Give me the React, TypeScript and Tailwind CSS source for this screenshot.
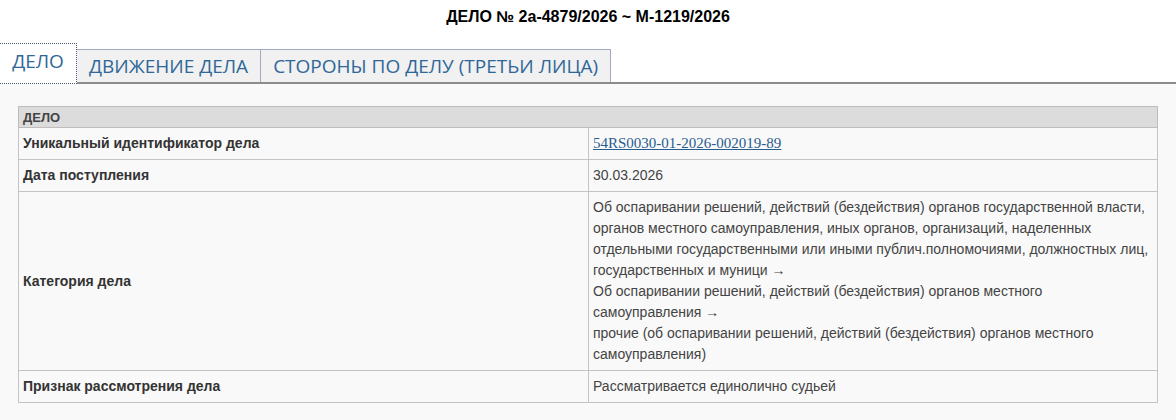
const rows = [
  {
    label: 'Уникальный идентификатор дела',
    value: (
      <a href="#" className="font-['Liberation_Serif',serif] text-[15px] text-[#2a5d8f] underline">
        54RS0030-01-2026-002019-89
      </a>
    ),
  },
  { label: 'Дата поступления', value: '30.03.2026' },
  {
    label: 'Категория дела',
    value: (
      <>
        Об оспаривании решений, действий (бездействия) органов государственной власти, органов
        местного самоуправления, иных органов, организаций, наделенных отдельными
        государственными или иными публич.полномочиями, должностных лиц, государственных и
        муници →
        <br />
        Об оспаривании решений, действий (бездействия) органов местного самоуправления →
        <br />
        прочие (об оспаривании решений, действий (бездействия) органов местного самоуправления)
      </>
    ),
  },
  { label: 'Признак рассмотрения дела', value: 'Рассматривается единолично судьей' },
];

const tabs = ['ДВИЖЕНИЕ ДЕЛА', 'СТОРОНЫ ПО ДЕЛУ (ТРЕТЬИ ЛИЦА)'];

export default function App() {
  return (
    <div className="w-[1176px] h-[420px] bg-[#f9f9f9] font-['Liberation_Sans',Arial,sans-serif] overflow-hidden">
      <div className="bg-white">
        {/* Title */}
        <div className="h-[44px] pt-[7px] text-center text-[16px] font-bold text-black leading-[20px]">
          ДЕЛО № 2а-4879/2026 ~ М-1219/2026
        </div>

        {/* Tabs */}
        <div className="flex items-end h-[40px] border-b-2 border-[#8c8c8c] font-['Open_Sans',sans-serif] text-[19px] text-[#2f6798]">
          <div className="relative -mb-[2px] h-[41px] w-[77px] bg-white border border-dotted border-[#4a5a78] border-l-0 flex items-center justify-center pb-[4px]">
            ДЕЛО
          </div>
          {tabs.map((t) => (
            <div
              key={t}
              className="h-[33px] px-[12px] bg-[#f1f1f1] border border-b-0 border-[#a3a8c4] -ml-px first:ml-0 flex items-center leading-none pt-[1px]"
            >
              {t}
            </div>
          ))}
        </div>
      </div>

      {/* Table */}
      <div className="px-[18px] pt-[22px]">
        <table className="w-[1140px] border-collapse text-[14px] leading-[21px] text-[#444]">
          <tbody>
            <tr>
              <td
                colSpan={2}
                className="bg-[#dcdcdc] border border-[#bdbdbd] px-[4px] h-[21px] py-0 text-[13px] font-bold text-[#444] leading-[19px]"
              >
                ДЕЛО
              </td>
            </tr>
            {rows.map((r) => (
              <tr key={r.label}>
                <td className="w-[570px] border border-[#c4c4c4] px-[4px] py-[5px] font-bold text-[#333] align-middle">
                  {r.label}
                </td>
                <td className="border border-[#c4c4c4] px-[4px] py-[5px] align-middle">{r.value}</td>
              </tr>
            ))}
          </tbody>
        </table>
      </div>
    </div>
  );
}
